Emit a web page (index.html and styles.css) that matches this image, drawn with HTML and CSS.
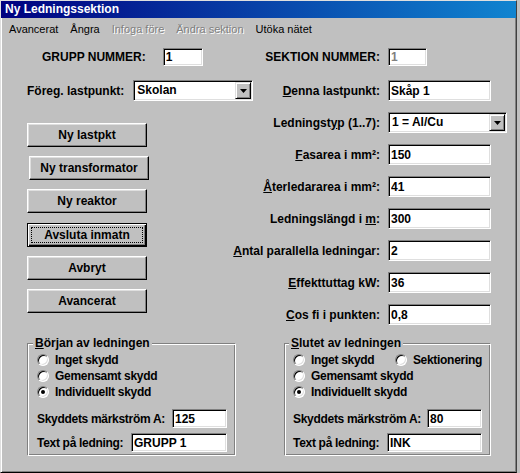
FILE: index.html
```html
<!DOCTYPE html>
<html lang="sv">
<head>
<meta charset="utf-8">
<title>Ny Ledningssektion</title>
<link rel="stylesheet" href="styles.css">
</head>
<body>
<div class="window">
  <div class="titlebar">Ny Ledningssektion</div>
  <div class="menubar">
    <span class="menu-item">Avancerat</span>
    <span class="menu-item">Ångra</span>
    <span class="menu-item disabled">Infoga före</span>
    <span class="menu-item disabled">Ändra sektion</span>
    <span class="menu-item">Utöka nätet</span>
  </div>
  <div class="client">
    <div class="col-left">
      <div class="row row-grupp">
        <span class="label">GRUPP NUMMER:</span>
        <input class="field w-num" type="text" value="1">
      </div>
      <div class="row row-foreg">
        <span class="label">Föreg. lastpunkt:</span>
        <div class="combo">
          <span class="combo-text">Skolan</span>
          <span class="combo-btn"><svg width="7" height="4" viewBox="0 0 7 4"><polygon points="0,0 7,0 3.5,4" fill="#000"/></svg></span>
        </div>
      </div>
      <div class="buttons">
        <button class="btn">Ny lastpkt</button>
        <button class="btn btn-shift">Ny transformator</button>
        <button class="btn">Ny reaktor</button>
        <button class="btn btn-default"><span class="focus">Avsluta inmatn</span></button>
        <button class="btn">Avbryt</button>
        <button class="btn">Avancerat</button>
      </div>
      <div class="group group-left">
        <div class="group-title"><u>B</u>örjan av ledningen</div>
        <div class="radio-row"><span class="radio"></span><span class="label">Inget skydd</span></div>
        <div class="radio-row"><span class="radio"></span><span class="label">Gemensamt skydd</span></div>
        <div class="radio-row"><span class="radio checked"></span><span class="label">Individuellt skydd</span></div>
        <div class="grow grow-first">
          <span class="label">Skyddets märkström A:</span>
          <input class="field w-small" type="text" value="125">
        </div>
        <div class="grow">
          <span class="label">Text på ledning:</span>
          <input class="field w-text" type="text" value="GRUPP 1">
        </div>
      </div>
    </div>
    <div class="col-right">
      <div class="frow frow-first">
        <span class="label flabel">SEKTION NUMMER:</span>
        <input class="field w-sek disabled" type="text" value="1">
      </div>
      <div class="frow frow-denna">
        <span class="label flabel"><u>D</u>enna lastpunkt:</span>
        <input class="field w-wide" type="text" value="Skåp 1">
      </div>
      <div class="frow">
        <span class="label flabel">Ledningst<u>y</u>p (1..7):</span>
        <div class="combo combo-wide">
          <span class="combo-text">1 = Al/Cu</span>
          <span class="combo-btn"><svg width="7" height="4" viewBox="0 0 7 4"><polygon points="0,0 7,0 3.5,4" fill="#000"/></svg></span>
        </div>
      </div>
      <div class="frow">
        <span class="label flabel"><u>F</u>asarea i mm²:</span>
        <input class="field w-wide" type="text" value="150">
      </div>
      <div class="frow">
        <span class="label flabel"><u>Å</u>terledararea i mm²:</span>
        <input class="field w-wide" type="text" value="41">
      </div>
      <div class="frow">
        <span class="label flabel">Ledningslängd i <u>m</u>:</span>
        <input class="field w-wide" type="text" value="300">
      </div>
      <div class="frow">
        <span class="label flabel"><u>A</u>ntal parallella ledningar:</span>
        <input class="field w-wide" type="text" value="2">
      </div>
      <div class="frow">
        <span class="label flabel"><u>E</u>ffekttuttag kW:</span>
        <input class="field w-wide" type="text" value="36">
      </div>
      <div class="frow">
        <span class="label flabel"><u>C</u>os fi i punkten:</span>
        <input class="field w-wide" type="text" value="0,8">
      </div>
      <div class="group group-right">
        <div class="group-title"><u>S</u>lutet av ledningen</div>
        <div class="radio-line">
          <div class="radio-row radio-fixed"><span class="radio"></span><span class="label">Inget skydd</span></div>
          <div class="radio-row"><span class="radio"></span><span class="label">Sektionering</span></div>
        </div>
        <div class="radio-row"><span class="radio"></span><span class="label">Gemensamt skydd</span></div>
        <div class="radio-row"><span class="radio checked"></span><span class="label">Individuellt skydd</span></div>
        <div class="grow grow-first">
          <span class="label">Skyddets märkström A:</span>
          <input class="field w-small" type="text" value="80">
        </div>
        <div class="grow">
          <span class="label">Text på ledning:</span>
          <input class="field w-text2" type="text" value="INK">
        </div>
      </div>
    </div>
  </div>
</div>
</body>
</html>
```
FILE: styles.css
```css
* { box-sizing: border-box; }

html, body {
  margin: 0;
  padding: 0;
  background: #c0c0c0;
}

body {
  width: 520px;
  height: 473px;
  overflow: hidden;
  font-family: "Liberation Sans", Arial, sans-serif;
  color: #000;
}

.window {
  width: 517px;
  height: 473px;
  background: #c0c0c0;
  border-top: 1px solid #dfdfdf;
  border-left: 1px solid #dfdfdf;
  border-right: 1px solid #404040;
  border-bottom: 1px solid #000;
  box-shadow: inset 1px 1px #fff, inset -1px -1px #808080;
}

.titlebar {
  height: 17px;
  line-height: 17px;
  padding-left: 4px;
  background: linear-gradient(to right, #000080, #1084d0);
  color: #fff;
  font-weight: bold;
  font-size: 12px;
  white-space: nowrap;
}

.menubar {
  display: flex;
  height: 22px;
  padding: 3px 0 0 2px;
  font-size: 11px;
  line-height: 17px;
}

.menu-item {
  padding: 0 6px;
  white-space: nowrap;
}

.menu-item.disabled {
  color: #808080;
  text-shadow: 1px 1px 0 #fff;
}

.client {
  display: flex;
  padding: 8px 0 0 26px;
}

.col-left {
  width: 203px;
  flex: none;
  display: flex;
  flex-direction: column;
}

.col-right {
  width: 277px;
  flex: none;
  display: flex;
  flex-direction: column;
}

.label {
  font-weight: bold;
  font-size: 12px;
  line-height: 14px;
  white-space: nowrap;
}

.row {
  display: flex;
  align-items: center;
}

.row-grupp {
  padding-left: 15px;
  gap: 17px;
  height: 18px;
}

.row-foreg {
  margin-top: 14px;
  gap: 9px;
  height: 21px;
}

.field {
  display: block;
  margin: 0;
  height: 21px;
  padding: 0 2px;
  border: 1px solid;
  border-color: #808080 #fff #fff #808080;
  box-shadow: inset 1px 1px #000, inset -1px -1px #dfdfdf;
  background: #fff;
  color: #000;
  font-family: "Liberation Sans", Arial, sans-serif;
  font-weight: bold;
  font-size: 12px;
  outline: none;
  flex: none;
}

.field.disabled { color: #808080; }

.w-num { width: 40px; height: 18px; }
.w-sek { width: 39px; height: 18px; }
.w-wide { width: 103px; }
.w-small { width: 55px; height: 19px; margin-left: auto; }
.w-text { width: 96px; height: 19px; margin-left: auto; }
.w-text2 { width: 95px; height: 19px; margin-left: auto; }

.combo {
  display: flex;
  align-items: stretch;
  width: 120px;
  height: 21px;
  padding: 1px;
  border: 1px solid;
  border-color: #808080 #fff #fff #808080;
  box-shadow: inset 1px 1px #000, inset -1px -1px #dfdfdf;
  background: #fff;
  flex: none;
}

.combo-wide { width: 119px; }

.combo-text {
  flex: 1;
  padding-left: 2px;
  font-weight: bold;
  font-size: 12px;
  line-height: 17px;
  white-space: nowrap;
}

.combo-btn {
  width: 16px;
  flex: none;
  display: flex;
  align-items: center;
  justify-content: center;
  background: #c0c0c0;
  border: 1px solid;
  border-color: #dfdfdf #000 #000 #dfdfdf;
  box-shadow: inset 1px 1px #fff, inset -1px -1px #808080;
}

.buttons {
  margin-top: 22px;
  display: flex;
  flex-direction: column;
  align-items: flex-start;
  gap: 9px;
}

.btn {
  width: 120px;
  height: 24px;
  margin: 0;
  padding: 0;
  background: #c0c0c0;
  border: 1px solid;
  border-color: #fff #000 #000 #fff;
  box-shadow: inset -1px -1px #808080, inset 1px 1px #dfdfdf;
  font-family: "Liberation Sans", Arial, sans-serif;
  font-weight: bold;
  font-size: 12px;
  color: #000;
  line-height: 14px;
}

.btn-shift { margin-left: 2px; }

.btn-default {
  margin-top: 1px;
  padding: 3px;
  border-color: #000;
  box-shadow: inset 1px 1px #fff, inset -1px -1px #000, inset -2px -2px #808080;
}

.focus {
  display: block;
  height: 16px;
  border: 1px dotted #000;
  line-height: 14px;
}

.group {
  display: flex;
  flex-direction: column;
  padding: 0 8px 3px 9px;
  border-top: 1px solid #808080;
  border-left: 1px solid #808080;
  border-right: 1px solid #fff;
  border-bottom: 1px solid #fff;
  box-shadow: inset 1px 1px #fff, inset -1px -1px #808080;
}

.group .label {
  letter-spacing: -0.3px;
}

.group-left {
  margin-top: 30px;
  width: 209px;
}

.group-right {
  margin-top: 18px;
  margin-left: 54px;
  width: 207px;
  padding-left: 8px;
}

.group-title {
  width: fit-content;
  margin: -8px 0 0 -4px;
  padding: 0 2px;
  background: #c0c0c0;
  font-weight: bold;
  font-size: 12px;
  line-height: 14px;
  white-space: nowrap;
}

.group-title + * { margin-top: 2px; }

.radio-line {
  display: flex;
}

.radio-row {
  display: flex;
  align-items: center;
  gap: 6px;
  height: 16px;
}

.radio-fixed { width: 104px; }

.radio {
  width: 12px;
  height: 12px;
  flex: none;
  border-radius: 50%;
  background: #fff;
  border: 1px solid;
  border-color: #808080 #fff #fff #808080;
  box-shadow: inset 1px 1px #000, inset -1px -1px #dfdfdf;
  display: flex;
  align-items: center;
  justify-content: center;
}

.radio.checked::after {
  content: "";
  width: 4px;
  height: 4px;
  border-radius: 50%;
  background: #000;
}

.grow {
  display: flex;
  align-items: center;
  margin-top: 5px;
}

.grow-first { margin-top: 9px; }

.frow {
  display: flex;
  align-items: center;
  gap: 8px;
  margin-top: 11px;
}

.frow-first { margin-top: 0; }
.frow-denna { margin-top: 14px; }

.flabel {
  width: 150px;
  flex: none;
  text-align: right;
}
```
